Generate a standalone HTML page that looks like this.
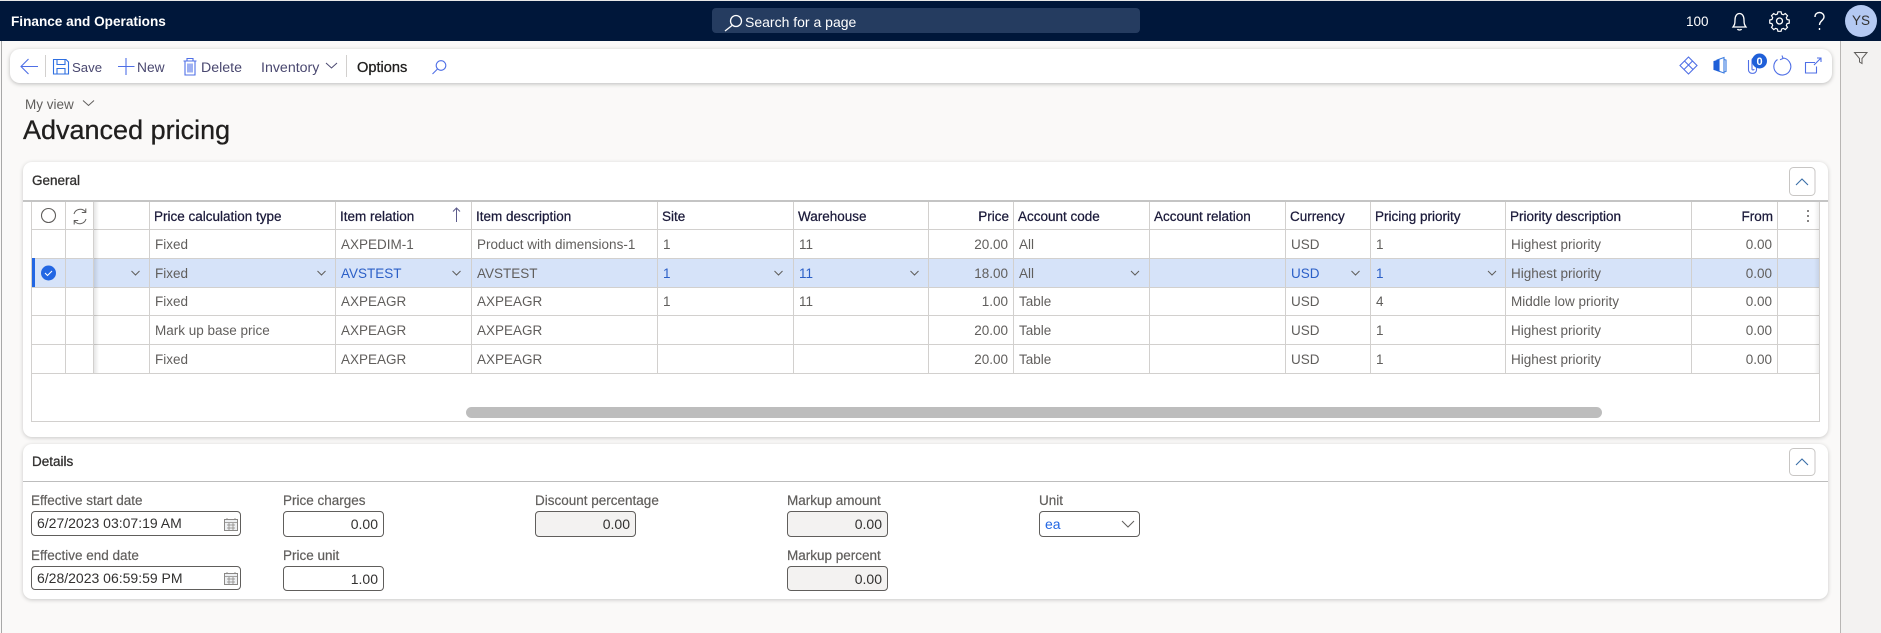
<!DOCTYPE html>
<html><head><meta charset="utf-8"><title>Advanced pricing</title>
<style>
html,body{margin:0;padding:0;width:1881px;height:633px;overflow:hidden;background:#faf9f8;font-family:"Liberation Sans",sans-serif;font-size:13.5px;color:#605e5c}
.a{position:absolute;white-space:nowrap}
.t{position:absolute;white-space:nowrap;line-height:20px;height:20px}
.card{position:absolute;left:23px;width:1805px;background:#fff;border-radius:9px;box-shadow:0 1px 4px rgba(0,0,0,.2)}
.sb{-webkit-text-stroke:.3px currentColor}
table{position:absolute;left:31px;top:202px;border-collapse:separate;border-spacing:0;table-layout:fixed;width:1789px}
td,th{box-sizing:border-box;border-right:1px solid #d2d0ce;border-bottom:1px solid #d2d0ce;padding:0 5px 0 5px;font-size:13.5px;font-weight:normal;text-align:left;white-space:nowrap;overflow:hidden;color:#605e5c}
th{color:#1b1a3a;padding:2px 4px 0 4px;-webkit-text-stroke:.25px currentColor}
td:first-child,th:first-child{border-left:1px solid #d2d0ce}
.r{text-align:right}
tr.s td{background:#d6e3f9}
tr.s td.l{color:#2b5fc7}
.h0{height:28px}.h1{height:29px}.h2{height:28px}
.lbl{color:#605e5c;font-size:13.5px;-webkit-text-stroke:.2px currentColor}
.inp{position:absolute;box-sizing:border-box;background:#fff;border:1px solid #605e5c;border-radius:4px;color:#323130;font-size:14px;line-height:23px;padding:0 5px;white-space:nowrap}
.dis{background:#f3f2f1}
.rt{text-align:right}
</style></head><body>
<div class="a" style="left:0;top:0;width:1881px;height:1px;background:#e8e8e8"></div>
<div class="a" style="left:0;top:1px;width:1881px;height:40px;background:#00173a"></div>
<div class="t" style="left:11px;top:12px;color:#fff;font-weight:bold;font-size:13.6px">Finance and Operations</div>
<div class="a" style="left:712px;top:8px;width:428px;height:25px;background:#253c60;border-radius:4px"></div>
<div class="t" style="left:745px;top:12px;color:#fff;font-size:14px">Search for a page</div>
<div class="t" style="left:1686px;top:12px;color:#fff;font-size:13.5px">100</div>
<div class="a" style="left:1845px;top:5px;width:32px;height:32px;border-radius:50%;background:#b4c9f2;color:#323130;text-align:center;line-height:32px;font-size:13.5px">YS</div>

<div class="a" style="left:1px;top:41px;width:1px;height:592px;background:#a8a8a8"></div>
<div class="a" style="left:1840px;top:41px;width:41px;height:592px;background:#f3f2f1;border-left:1px solid #b8b6b4;box-sizing:border-box"></div>

<div class="a" style="left:10px;top:49px;width:1822px;height:34px;background:#fff;border-radius:10px;box-shadow:0 1px 4px rgba(0,0,0,.25)"></div>
<div class="t" style="left:72px;top:58px;color:#4a4870;font-size:13.2px">Save</div>
<div class="t" style="left:137px;top:58px;color:#4a4870;font-size:13.8px">New</div>
<div class="t" style="left:201px;top:58px;color:#4a4870;font-size:14.2px">Delete</div>
<div class="t" style="left:261px;top:58px;color:#4a4870;font-size:14.2px">Inventory</div>
<div class="t sb" style="left:357px;top:58px;color:#201f1e;font-size:14.6px">Options</div>

<div class="t" style="left:25px;top:95px;color:#605e5c;font-size:13.5px">My view</div>
<div class="t" style="left:23px;top:114px;height:32px;line-height:32px;color:#201f1e;font-size:27px;-webkit-text-stroke:.3px currentColor">Advanced pricing</div>

<div class="card" style="top:162px;height:275px"></div>
<div class="a" style="left:23px;top:200px;width:1805px;height:2px;background:#c4c4c4"></div>
<div class="t sb" style="left:32px;top:171px;color:#323130">General</div>
<div class="a" style="left:31px;top:202px;width:1789px;height:220px;box-sizing:border-box;border:1px solid #d2d0ce;border-top:0"></div>

<table>
<colgroup><col style="width:35px"><col style="width:28px"><col style="width:56px"><col style="width:186px"><col style="width:136px"><col style="width:186px"><col style="width:136px"><col style="width:135px"><col style="width:85px"><col style="width:136px"><col style="width:136px"><col style="width:85px"><col style="width:135px"><col style="width:186px"><col style="width:86px"><col style="width:42px"></colgroup>
<tr class="h0"><th></th><th></th><th></th><th>Price calculation type</th><th>Item relation</th><th>Item description</th><th>Site</th><th>Warehouse</th><th class="r">Price</th><th>Account code</th><th>Account relation</th><th>Currency</th><th>Pricing priority</th><th>Priority description</th><th class="r">From</th><th></th></tr>
<tr class="h1"><td></td><td></td><td></td><td>Fixed</td><td>AXPEDIM-1</td><td>Product with dimensions-1</td><td>1</td><td>11</td><td class="r">20.00</td><td>All</td><td></td><td>USD</td><td>1</td><td>Highest priority</td><td class="r">0.00</td><td></td></tr>
<tr class="h1 s"><td></td><td></td><td></td><td>Fixed</td><td class="l">AVSTEST</td><td>AVSTEST</td><td class="l">1</td><td class="l">11</td><td class="r">18.00</td><td>All</td><td></td><td class="l">USD</td><td class="l">1</td><td>Highest priority</td><td class="r">0.00</td><td></td></tr>
<tr class="h2"><td></td><td></td><td></td><td>Fixed</td><td>AXPEAGR</td><td>AXPEAGR</td><td>1</td><td>11</td><td class="r">1.00</td><td>Table</td><td></td><td>USD</td><td>4</td><td>Middle low priority</td><td class="r">0.00</td><td></td></tr>
<tr class="h1"><td></td><td></td><td></td><td>Mark up base price</td><td>AXPEAGR</td><td>AXPEAGR</td><td></td><td></td><td class="r">20.00</td><td>Table</td><td></td><td>USD</td><td>1</td><td>Highest priority</td><td class="r">0.00</td><td></td></tr>
<tr class="h1"><td></td><td></td><td></td><td>Fixed</td><td>AXPEAGR</td><td>AXPEAGR</td><td></td><td></td><td class="r">20.00</td><td>Table</td><td></td><td>USD</td><td>1</td><td>Highest priority</td><td class="r">0.00</td><td></td></tr>
</table>
<div class="a" style="left:94px;top:202px;width:5px;height:171px;background:linear-gradient(90deg,rgba(0,0,0,.1),rgba(0,0,0,0))"></div>
<div class="a" style="left:1814px;top:202px;width:5px;height:171px;background:linear-gradient(270deg,rgba(0,0,0,.07),rgba(0,0,0,0))"></div>
<div class="a" style="left:32px;top:258px;width:3px;height:29px;background:#2266e3"></div>
<div class="a" style="left:466px;top:407px;width:1136px;height:11px;border-radius:6px;background:#bdbdbd"></div>

<div class="card" style="top:444px;height:155px"></div>
<div class="a" style="left:23px;top:481px;width:1805px;height:1px;background:#bdbdbd"></div>
<div class="t sb" style="left:32px;top:452px;color:#323130">Details</div>

<div class="t lbl" style="left:31px;top:491px">Effective start date</div>
<div class="inp" style="left:31px;top:511px;width:210px;height:25px">6/27/2023 03:07:19 AM</div>
<div class="t lbl" style="left:31px;top:546px">Effective end date</div>
<div class="inp" style="left:31px;top:566px;width:210px;height:24px;line-height:22px">6/28/2023 06:59:59 PM</div>
<div class="t lbl" style="left:283px;top:491px">Price charges</div>
<div class="inp rt" style="left:283px;top:511px;width:101px;height:26px;line-height:25px">0.00</div>
<div class="t lbl" style="left:283px;top:546px">Price unit</div>
<div class="inp rt" style="left:283px;top:566px;width:101px;height:25px;line-height:25px">1.00</div>
<div class="t lbl" style="left:535px;top:491px">Discount percentage</div>
<div class="inp rt dis" style="left:535px;top:511px;width:101px;height:26px;line-height:25px">0.00</div>
<div class="t lbl" style="left:787px;top:491px">Markup amount</div>
<div class="inp rt dis" style="left:787px;top:511px;width:101px;height:26px;line-height:25px">0.00</div>
<div class="t lbl" style="left:787px;top:546px">Markup percent</div>
<div class="inp rt dis" style="left:787px;top:566px;width:101px;height:25px;line-height:25px">0.00</div>
<div class="t lbl" style="left:1039px;top:491px">Unit</div>
<div class="inp" style="left:1039px;top:511px;width:101px;height:26px;line-height:25px;color:#2266e3">ea</div>

<svg class="a" style="left:0;top:0" width="1881" height="633" viewBox="0 0 1881 633" fill="none">
<!-- nav search -->
<g stroke="#fff" stroke-width="1.3"><circle cx="736" cy="21" r="5.5"/><path d="M732 25.500 725 31"/></g>
<!-- bell -->
<g stroke="#fff" stroke-width="1.3"><path d="M1733 27h13c-1.500-2-2-3-2-7 0-4-1.800-6.500-4.500-6.500s-4.500 2.500-4.500 6.500c0 4-.5 5-2 7z"/><path d="M1737.500 29c.5 1.300 3.500 1.300 4 0"/></g>
<!-- gear -->
<g stroke="#fff" stroke-width="1.3"><circle cx="1779.500" cy="21" r="3"/><path d="M1777.800 13h3.400l.6 2.400 1.900.8 2.100-1.300 2.400 2.400-1.300 2.100.8 1.900 2.400.6v3.400l-2.400.6-.8 1.900 1.300 2.100-2.400 2.400-2.100-1.300-1.900.8-.6 2.400h-3.400l-.6-2.400-1.900-.8-2.100 1.300-2.400-2.400 1.300-2.100-.8-1.900-2.400-.6v-3.400l2.400-.6.8-1.900-1.300-2.100 2.400-2.400 2.100 1.300 1.900-.8z" transform="translate(1779.500 21) scale(.92) translate(-1779.500 -23)"/></g>
<!-- help -->
<g stroke="#fff" stroke-width="1.4"><path d="M1815 17c0-3 2-4.500 4.500-4.500s4.500 1.800 4.500 4.300c0 3.700-4.500 3.900-4.500 8.200"/><path d="M1819.500 28v2"/></g>
<!-- funnel -->
<path d="M1854.500 52.500h12.500l-5 6v5l-2.500-1.500v-3.500z" stroke="#605e5c"/>
<!-- toolbar left -->
<g stroke="#4f6fe6" stroke-width="1.100" transform="translate(0 1)">
<path d="M38 65.500H21.500M28.500 58l-7.500 7.500 7.500 7.500"/>
<path d="M53.500 58.500h12.500l2.500 2.500v12h-15z" stroke="#2f6fe0"/><path d="M57 58.500v5h8v-5M57 73v-5.500h8V73" stroke="#2f6fe0"/>
<path d="M126 57v17M118 65.500h16.500"/>
<path d="M183.500 60h13M187 60v-2.500h6V60M185 60v14h10V60M188 62.500v9M190 62.500v9M192 62.500v9"/>
<circle cx="441" cy="64.500" r="4.800"/><path d="M437.500 68 432.500 73"/>
</g>
<path d="M45.500 55v22M346.500 55v22" stroke="#d2d0ce"/>
<path d="M326 63l5.500 5 5.500-5" stroke="#4a4870"/>
<path d="M83 100.500l5.500 5 5.500-5" stroke="#605e5c"/>
<!-- toolbar right -->
<g stroke="#4f6fe6" stroke-width="1.100">
<path d="M1688.500 57l8.500 8.500-8.500 8.500-8.500-8.500zM1684.500 61l8.500 8.500M1692.500 61l-8.500 8.500"/>
<path d="M1717 60l7-2.500v15.500l-7-2.500z" stroke="#3a7be0"/><path d="M1714 61.500l5-1.500v11l-5-1.500z" fill="#1f5fd8" stroke="#1f5fd8"/><path d="M1724 59.500l2 .5v11.500l-2 .5" stroke="#3a7be0"/>
<path d="M1748.500 60v10c0 4.500 8 4.500 8 0v-10c0-2.500-4.500-2.500-4.500 0v9c0 1.300 2 1.300 2 0"/>
<path d="M1777.500 59.500a8.500 8.500 0 1 0 5-1.500M1782 55.500l1 3-3 1.300"/>
<path d="M1816.500 66.500V73h-11v-10.500h9.500M1814 65l6.500-6.500M1817 58h4v4"/>
</g>
<circle cx="1759.500" cy="61" r="7.500" fill="#1f5fd8"/>
<text x="1759.500" y="65" fill="#fff" font-size="11" font-weight="bold" text-anchor="middle" font-family="Liberation Sans">0</text>
<!-- grid icons -->
<circle cx="48.500" cy="215.500" r="7" stroke="#605e5c" stroke-width="1.100"/>
<g stroke="#605e5c"><path d="M74 214a6.500 6.500 0 0 1 11.500-2M86 219a6.500 6.500 0 0 1-11.500 2M85.800 208.500v4h-4M74.200 224.500v-4h4"/></g>
<path d="M456.500 222v-14M453 211.500l3.500-3.500 3.500 3.500" stroke="#5b5a8a"/>
<g fill="#605e5c"><circle cx="1808" cy="211" r="1"/><circle cx="1808" cy="216" r="1"/><circle cx="1808" cy="221" r="1"/></g>
<circle cx="48.500" cy="273" r="7.500" fill="#2266e3"/><path d="M45 273l2.500 2.500 4.500-4.500" stroke="#fff" stroke-width="1.100"/>
<g stroke="#605e5c" fill="none">
<path d="M131.500 271l4 4 4-4M317.500 271l4 4 4-4M452.500 271l4 4 4-4M774.500 271l4 4 4-4M910.500 271l4 4 4-4M1131 271l4 4 4-4M1351.500 271l4 4 4-4M1488 271l4 4 4-4"/>
<rect x="1789.500" y="167.500" width="25.500" height="28" rx="4" stroke="#c8c6c4"/>
<rect x="1789.500" y="448.500" width="25.500" height="27" rx="4" stroke="#c8c6c4"/>
</g>
<path d="M1796 185l6-6 6 6M1796 465l6-6 6 6" stroke="#3a6ea8" stroke-width="1.100"/>
<!-- calendar -->
<g stroke="#8a8886"><rect x="224.500" y="519.500" width="13" height="11" fill="#eef0f2"/><path d="M224.500 522.500h13M227 518v2M235 518v2M227 525h8M227 528h8M229 523v7M233 523v7" stroke-width=".8"/>
<rect x="224.500" y="573.500" width="13" height="11" fill="#eef0f2"/><path d="M224.500 576.500h13M227 572v2M235 572v2M227 579h8M227 582h8M229 577v7M233 577v7" stroke-width=".8"/></g>
<path d="M1122 521l6 6 6-6" stroke="#605e5c"/>
</svg>
</body></html>
